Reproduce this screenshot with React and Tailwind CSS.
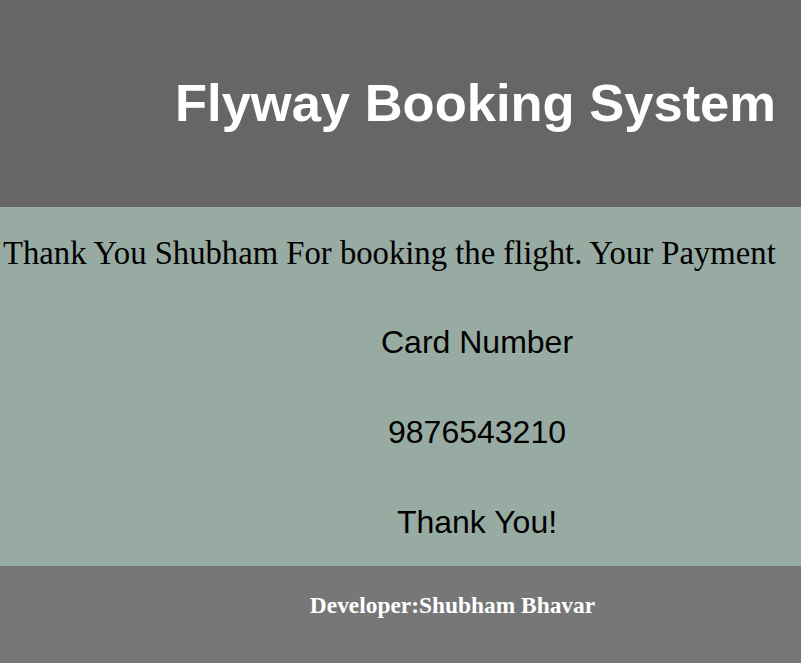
export default function App() {
  return (
    <div className="w-[801px] h-[663px] flex flex-col overflow-hidden">
      <header className="h-[207px] bg-[#666666] flex justify-end pr-[25px] pt-[75px]">
        <h1 className="text-white font-bold text-[52.5px] leading-[56px] font-['Liberation_Sans',Arial,sans-serif] h-fit">
          Flyway Booking System
        </h1>
      </header>

      <main className="h-[359px] bg-[#98aba2] flex flex-col">
        <div className="h-[116px] whitespace-nowrap pl-[3px] pt-[26px] text-black text-[32.7px] leading-[40px] font-['Liberation_Serif','Times_New_Roman',serif]">
          Thank You Shubham For booking the flight. Your Payment
        </div>
        <div className="flex flex-col items-center pl-[153px] gap-[52px] font-['Liberation_Sans',Arial,sans-serif] text-[32px] leading-[38px] text-black">
          <p>Card Number</p>
          <p>9876543210</p>
          <p>Thank You!</p>
        </div>
      </main>

      <footer className="flex-1 bg-[#777777] flex justify-center pl-[104px] pt-[26px]">
        <p className="text-white font-bold text-[23.4px] leading-[26px] font-['Liberation_Serif','Times_New_Roman',serif] h-fit">
          Developer:Shubham Bhavar
        </p>
      </footer>
    </div>
  )
}
